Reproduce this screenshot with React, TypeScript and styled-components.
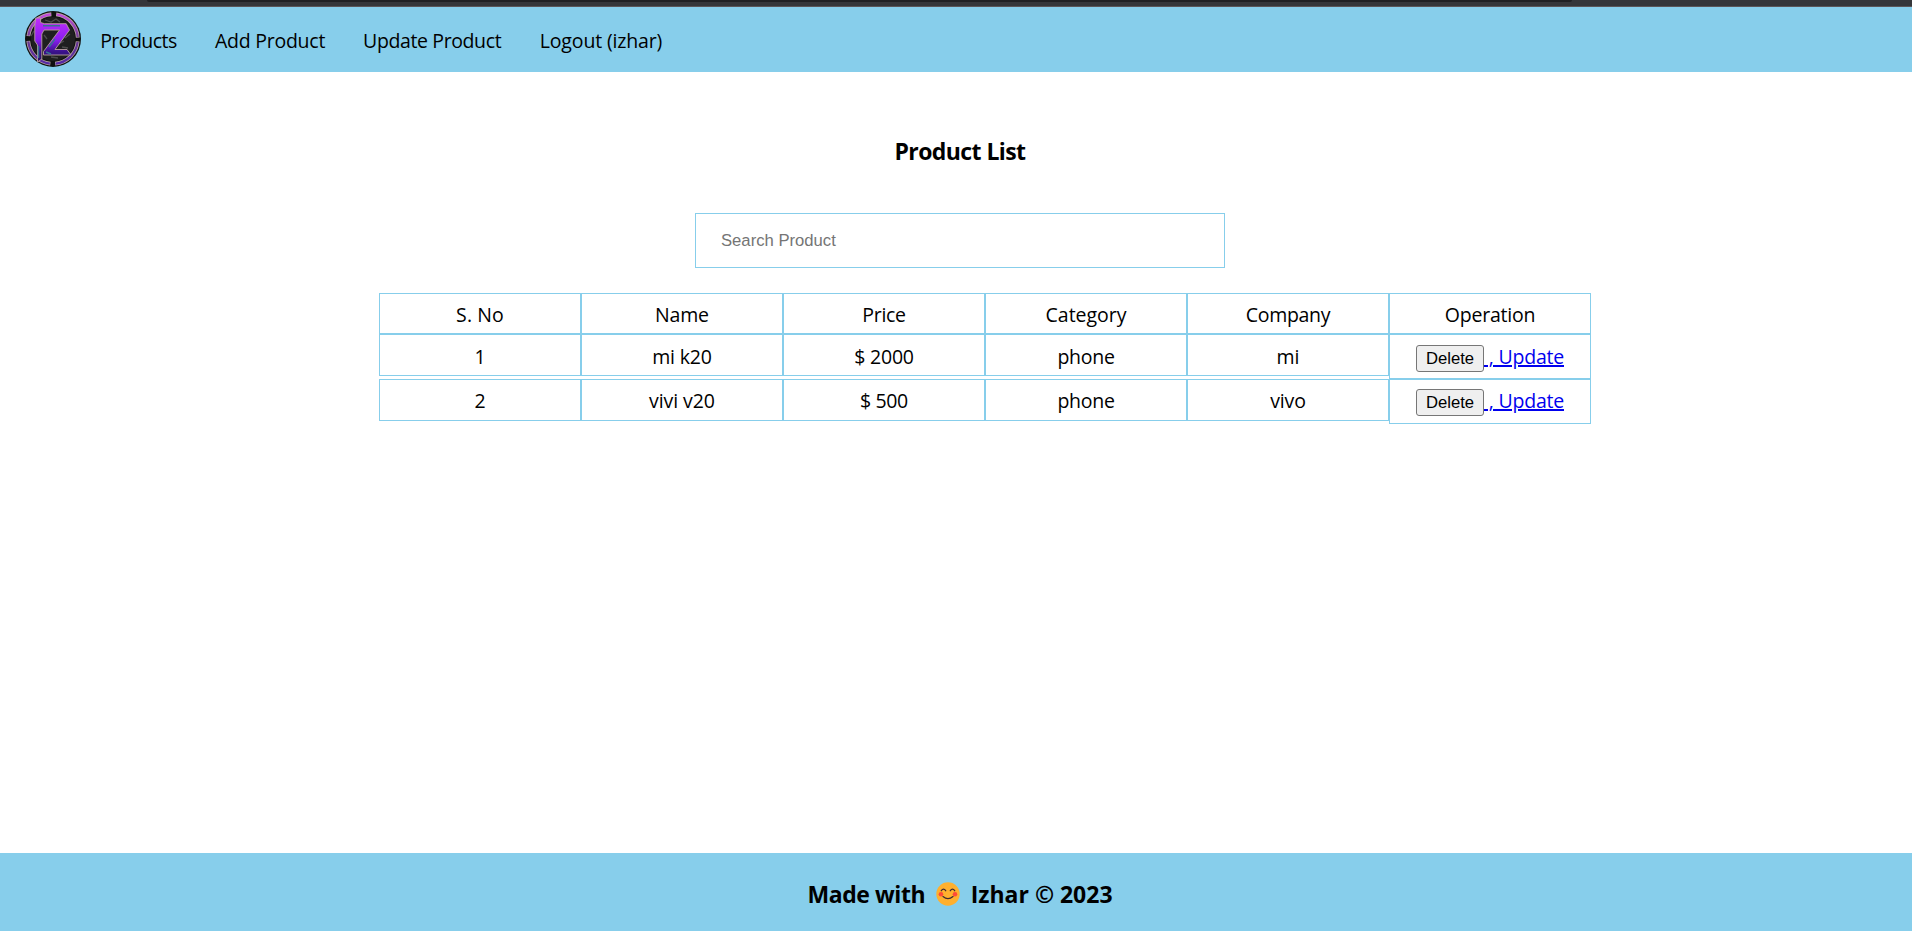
import React from 'react';
import styled, { createGlobalStyle } from 'styled-components';

const SKY = '#87ceeb';

const GlobalStyle = createGlobalStyle`
  * { box-sizing: border-box; }
  body {
    margin: 0;
    background: #fff;
    color: #000;
    font-family: 'Open Sans', 'Noto Sans', sans-serif;
    font-size: 19.5px;
    line-height: 26px;
    overflow: hidden;
  }
`;

const Page = styled.div`
  height: 931px;
  display: flex;
  flex-direction: column;
`;

const WindowEdge = styled.div`
  flex: none;
  height: 7px;
  background: #35363a;
  border-bottom: 1px solid #5b5558;
`;

const AddressStrip = styled.div`
  height: 2px;
  margin: 0 340px 0 147px;
  background: #202124;
  border-radius: 0 0 8px 8px;
`;

const Nav = styled.nav`
  flex: none;
  height: 65px;
  display: flex;
  align-items: flex-start;
  padding: 4px 0 0 25px;
  background: ${SKY};
`;

const NavList = styled.ul`
  display: flex;
  gap: 37.2px;
  margin: 0;
  padding: 17px 0 0 19.2px;
  list-style: none;
`;

const NavItem = styled.li<{ $width: number }>`
  width: ${(p) => p.$width}px;
  white-space: nowrap;
`;

const NavLink = styled.a<{ $track: number }>`
  color: #000;
  text-decoration: none;
  letter-spacing: ${(p) => p.$track}px;
`;

const Main = styled.main`
  flex: 1;
  display: flex;
  flex-direction: column;
  align-items: center;
  padding-left: 8px;
`;

const Title = styled.h3`
  margin: 62px 0 0;
  font-size: 23px;
  line-height: 34px;
  font-weight: 700;
  letter-spacing: -0.58px;
`;

const Search = styled.input`
  width: 530px;
  height: 55px;
  margin: 45px 0 25px;
  padding: 0 25px;
  border: 1px solid ${SKY};
  border-radius: 0;
  outline: none;
  font-family: 'Liberation Sans', Arial, sans-serif;
  font-size: 16.67px;
  &::placeholder { color: #757575; opacity: 1; }
`;

const Table = styled.div`
  width: 1212px;
  margin-left: 50px;
`;

const Row = styled.ul<{ $height: number }>`
  display: flex;
  align-items: flex-start;
  height: ${(p) => p.$height}px;
  margin: 0;
  padding: 0;
  list-style: none;
`;

const Cell = styled.li<{ $height: number; $track?: number; $top?: number }>`
  width: 202px;
  height: ${(p) => p.$height}px;
  padding-top: ${(p) => p.$top ?? 8.4}px;
  border: 1px solid ${SKY};
  text-align: center;
  white-space: pre;
  letter-spacing: ${(p) => p.$track ?? 0}px;
`;

const Operations = styled.div`
  display: flex;
  justify-content: center;
  align-items: baseline;
`;

const DeleteButton = styled.button`
  width: 68px;
  height: 27px;
  padding: 0;
  border: 1px solid #767676;
  border-radius: 3px;
  background: #efefef;
  color: #000;
  font-family: 'Liberation Sans', Arial, sans-serif;
  font-size: 16.67px;
  line-height: 25px;
`;

const UpdateLink = styled.a`
  color: #0000ee;
  text-decoration: underline;
  text-decoration-thickness: 2px;
  letter-spacing: -0.22px;
`;

const Footer = styled.footer`
  flex: none;
  height: 78px;
  display: flex;
  justify-content: center;
  padding: 23.5px 0 0 8px;
  background: ${SKY};
  font-size: 23px;
  line-height: 34px;
  font-weight: 700;
`;

const FooterText = styled.span<{ $track: number }>`
  letter-spacing: ${(p) => p.$track}px;
`;

const EmojiSvg = styled.svg`
  flex: none;
  width: 24px;
  height: 24px;
  margin: 5px 10.5px 0 11px;
`;

const LogoSvg = styled.svg`
  flex: none;
  width: 56px;
  height: 56px;
`;

const Logo = () => (
  <LogoSvg viewBox="0 0 56 56" fill="none">
    <defs>
      <linearGradient id="violet" x1="0" y1="8" x2="0" y2="50" gradientUnits="userSpaceOnUse">
        <stop offset="0" stopColor="#c02df8" />
        <stop offset="0.5" stopColor="#8a1df0" />
        <stop offset="0.78" stopColor="#3a128c" />
        <stop offset="1" stopColor="#2b1263" />
      </linearGradient>
      <linearGradient id="ring" x1="0" y1="0" x2="0" y2="56" gradientUnits="userSpaceOnUse">
        <stop offset="0" stopColor="#d04fe8" />
        <stop offset="0.5" stopColor="#6a3a90" />
        <stop offset="1" stopColor="#5426a8" />
      </linearGradient>
    </defs>
    <circle cx="28" cy="28" r="28" fill="#101010" />
    <circle cx="28" cy="28" r="24.8" stroke="#b3a0a2" strokeWidth="3.8" strokeDasharray="34 4.96" strokeDashoffset="-2.5" />
    <circle cx="28" cy="28" r="24.8" stroke="url(#ring)" strokeWidth="2.2" strokeDasharray="33 5.96" strokeDashoffset="-3" />
    <circle cx="28" cy="28" r="22" fill="#1f1f20" />
    <path d="M20 9l6 2 5-3 4 3M40 27l5-4M37 36l6 1M26 46l7 1M19 24l3 4M6 25l3-5M34 33l5-3" stroke="#4c4c4c" strokeWidth="1.3" />
    <path d="M10.8 7h4.8v4.5l4 1.2h21.6L44.5 19 30 38.5h12L46 44H18.5v-3.5L34.5 19H19l-2.2 4V48l-4.3 3V34l-2.7-4V14z" fill="url(#violet)" stroke="#b9a09e" strokeWidth="0.9" />
    <path d="M18 14.8h17M13.5 35v12M30 28l-6 8M21 41l5 2" stroke="#397292" strokeWidth="1.5" />
  </LogoSvg>
);

const SmileEmoji = () => (
  <EmojiSvg viewBox="0 0 24 24" fill="none">
    <circle cx="12" cy="12" r="11.7" fill="#ffb02e" />
    <circle cx="5" cy="12.2" r="2.3" fill="#ff4a38" />
    <circle cx="19" cy="12.2" r="2.3" fill="#ff4a38" />
    <path d="M5.3 8.7q2.2-3 4.4 0M14.3 8.7q2.2-3 4.4 0M7 14.6q5 4.2 10 0" stroke="#402a32" strokeWidth="1.3" strokeLinecap="round" />
  </EmojiSvg>
);

const links = [
  { text: 'Products', width: 77.5, track: -0.56 },
  { text: 'Add Product', width: 111, track: -0.24 },
  { text: 'Update Product', width: 139.5, track: -0.38 },
  { text: 'Logout (izhar)', width: 123, track: -0.15 },
];

type Entry = [text: string, track: number];

const headings: Entry[] = [
  ['S. No', 0.1], ['Name', -0.19], ['Price', -0.32],
  ['Category', -0.04], ['Company', -0.3], ['Operation', -0.24],
];

const products: Entry[][] = [
  [['1', 0], ['mi k20', -0.15], ['$ 2000', -0.19], ['phone', -0.27], ['mi', -0.05]],
  [['2', 0], ['vivi v20', -0.08], ['$ 500', -0.38], ['phone', -0.27], ['vivo', -0.13]],
];

export default function App() {
  return (
    <Page>
      <GlobalStyle />
      <WindowEdge><AddressStrip /></WindowEdge>
      <Nav>
        <Logo />
        <NavList>
          {links.map((l) => (
            <NavItem key={l.text} $width={l.width}><NavLink $track={l.track}>{l.text}</NavLink></NavItem>
          ))}
        </NavList>
      </Nav>
      <Main>
        <Title>Product List</Title>
        <Search placeholder="Search Product" />
        <Table>
          <Row $height={41}>
            {headings.map(([text, track]) => (
              <Cell key={text} $height={41} $track={track}>{text}</Cell>
            ))}
          </Row>
          {products.map((cells, i) => (
            <Row key={i} $height={45}>
              {cells.map(([text, track], j) => (
                <Cell key={j} $height={42} $track={track} $top={i ? 8.4 : 9.4}>{text}</Cell>
              ))}
              <Cell $height={45} $top={i ? 8.4 : 9.4}>
                <Operations>
                  <DeleteButton>Delete</DeleteButton>
                  <UpdateLink href="#">{' , Update'}</UpdateLink>
                </Operations>
              </Cell>
            </Row>
          ))}
        </Table>
      </Main>
      <Footer>
        <FooterText $track={-0.42}>Made with</FooterText>
        <SmileEmoji />
        <FooterText $track={-0.01}>Izhar © 2023</FooterText>
      </Footer>
    </Page>
  );
}
